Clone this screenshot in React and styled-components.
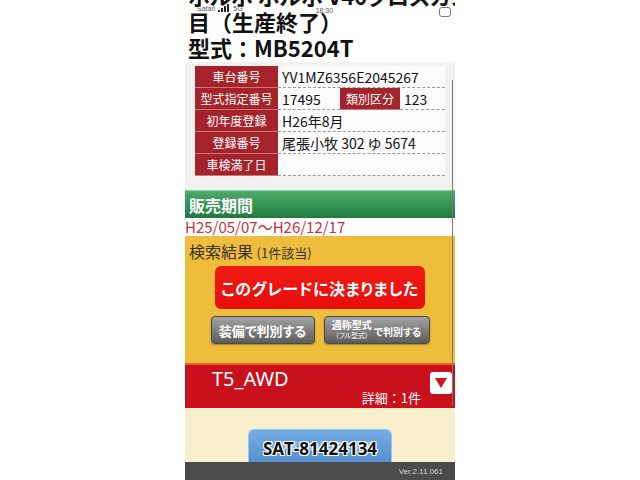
import React from 'react';
import styled, { createGlobalStyle } from 'styled-components';

const GlobalStyle = createGlobalStyle`
  body {
    margin: 0;
    background: #ffffff;
    font-family: "Noto Sans CJK JP", "Noto Sans", sans-serif;
  }
`;

const Phone = styled.div`
  position: relative;
  width: 270px;
  height: 480px;
  margin: 0 auto;
  overflow: hidden;
  background: #ffffff;
  display: flex;
  flex-direction: column;
`;

const StatusBar = styled.div`
  position: absolute;
  top: 2px;
  left: 12px;
  right: 4px;
  height: 12px;
  display: flex;
  align-items: center;
  gap: 3px;
  font-size: 7px;
  color: #555;
  font-family: "Liberation Sans", sans-serif;
  z-index: 2;
`;

const Clock = styled.span`
  margin-left: 70px;
  margin-top: 4px;
`;

const Battery = styled.span`
  margin-left: auto;
  width: 10px;
  height: 8px;
  margin-top: 8px;
  border: 1px solid #777;
  border-radius: 3px;
`;

const Header = styled.div`
  padding: 0 0 0 3px;
  margin-top: -18px;
`;

const TitleLine = styled.div`
  font-size: 22px;
  line-height: 26px;
  font-weight: 700;
  color: #111;
  white-space: nowrap;
  overflow: hidden;
  font-feature-settings: ${p => (p.$narrow ? '"palt"' : 'normal')};
`;

const InfoSection = styled.div`
  background: #f1f1f1;
  margin-top: 2px;
  padding: 4px 10px 14px;
`;

const Row = styled.div`
  display: grid;
  grid-template-columns: ${p => p.$cols || '83px 1fr'};
  height: 22px;
`;

const Label = styled.div`
  background: #a5232b;
  color: #fff;
  font-size: 12px;
  display: flex;
  align-items: center;
  justify-content: center;
  border-bottom: 1px solid #c9777b;
  box-sizing: border-box;
`;

const Value = styled.div`
  background: #fbfbfb;
  font-size: 14px;
  font-weight: 400;
  color: #111;
  display: flex;
  align-items: center;
  padding-left: 4px;
  border-bottom: 1px dashed #9a9a9a;
  box-sizing: border-box;
  white-space: nowrap;
`;

const GreenBar = styled.div`
  height: 28px;
  background: linear-gradient(#4fab68, #1f7b3d);
  border-top: 1px solid #8fcf9f;
  box-sizing: border-box;
  color: #fff;
  font-size: 16px;
  font-weight: 700;
  padding-left: 4px;
  display: flex;
  align-items: center;
`;

const DateRow = styled.div`
  height: 18px;
  line-height: 18px;
  font-size: 15px;
  color: #c5323a;
  background: #fff;
`;

const ResultArea = styled.div`
  background: #efbd3c;
  height: 129px;
  box-sizing: border-box;
  border-bottom: 2px solid #e2602a;
  display: flex;
  flex-direction: column;
  align-items: center;
`;

const ResultTitle = styled.div`
  align-self: stretch;
  padding: 3px 0 0 4px;
  height: 30px;
  box-sizing: border-box;
  font-size: 16px;
  color: #3b3222;
  small {
    font-size: 13px;
  }
`;

const DecideButton = styled.div`
  width: 210px;
  height: 43px;
  border-radius: 6px;
  background: linear-gradient(#f21a14, #e60d0d);
  color: #fff;
  font-size: 16px;
  font-weight: 700;
  display: flex;
  align-items: center;
  justify-content: center;
  font-feature-settings: "palt";
  letter-spacing: 0.5px;
`;

const ButtonRow = styled.div`
  display: flex;
  gap: 9px;
  margin-top: 7px;
`;

const GrayButton = styled.div`
  width: ${p => p.$w}px;
  height: 28px;
  box-sizing: border-box;
  border-radius: 4px;
  border: 1px solid #4a4a4a;
  background: linear-gradient(#a3a3a3, #5c5c5c);
  box-shadow: 0 1px 2px rgba(0, 0, 0, 0.35);
  color: #fff;
  font-weight: 700;
  font-size: 13px;
  display: flex;
  align-items: center;
  justify-content: center;
  font-feature-settings: "palt";
`;

const Stack = styled.span`
  display: flex;
  flex-direction: column;
  align-items: center;
  line-height: 10px;
  font-size: 10px;
  small {
    font-size: 7px;
    font-weight: 400;
  }
`;

const Trail = styled.span`
  font-size: 10px;
  margin-left: 2px;
  margin-top: 3px;
`;

const GradeBand = styled.div`
  height: 43px;
  background: #c8111d;
  display: flex;
  align-items: flex-start;
  padding: 2px 3px 0 27px;
  box-sizing: border-box;
  color: #fff;
`;

const GradeName = styled.div`
  font-size: 20px;
  line-height: 24px;
  font-family: "Noto Sans", sans-serif;
`;

const Detail = styled.div`
  margin-left: auto;
  align-self: flex-end;
  margin-bottom: 1px;
  font-size: 13px;
`;

const ArrowBox = styled.div`
  width: 22px;
  height: 22px;
  margin: 5px 0 0 9px;
  background: #fff;
  border-radius: 3px;
  display: flex;
  align-items: center;
  justify-content: center;
`;

const CreamArea = styled.div`
  height: 54px;
  background: #f6eecd;
  display: flex;
  justify-content: center;
  align-items: flex-end;
`;

const BlueButton = styled.div`
  position: relative;
  width: 144px;
  height: 33px;
  box-sizing: border-box;
  border-radius: 6px 6px 0 0;
  border: 1px solid #9cc3ec;
  border-bottom: none;
  background: linear-gradient(#74ade6, #5790cf);
  display: flex;
  align-items: center;
  justify-content: center;
`;

const FaintText = styled.span`
  font-size: 11px;
  color: rgba(255, 255, 255, 0.55);
  font-weight: 700;
`;

const Watermark = styled.span`
  position: absolute;
  left: 0;
  right: 0;
  top: 7px;
  text-align: center;
  font-family: "Open Sans", sans-serif;
  font-weight: 700;
  font-size: 17px;
  color: #111;
  text-shadow: 1px 1px 0 #fff, -1px -1px 0 #fff, 1px -1px 0 #fff, -1px 1px 0 #fff;
`;

const Footer = styled.div`
  height: 18px;
  background: #4b4b4b;
  color: #d8d8d8;
  font-size: 8px;
  font-family: "Liberation Sans", sans-serif;
  display: flex;
  align-items: center;
  justify-content: flex-end;
  padding-right: 12px;
`;

const ScrollLine = styled.div`
  position: absolute;
  left: 267px;
  top: 80px;
  width: 1px;
  height: 325px;
  background: #7a7a7a;
`;

export default function App() {
  return (
    <>
      <GlobalStyle />
      <Phone>
        <StatusBar>
          <span>Safari</span>
          <svg width="12" height="8" viewBox="0 0 12 8">
            <rect x="0" y="6" width="2" height="2" fill="#222" />
            <rect x="3" y="4" width="2" height="4" fill="#222" />
            <rect x="6" y="2" width="2" height="6" fill="#222" />
            <rect x="9" y="0" width="2" height="8" fill="#222" />
          </svg>
          <span>5G</span>
          <Clock>18:30</Clock>
          <Battery />
        </StatusBar>
        <Header>
          <TitleLine $narrow>ボルボ ボルボ V40クロスカントリー 1代</TitleLine>
          <TitleLine>目（生産終了）</TitleLine>
          <TitleLine>型式：MB5204T</TitleLine>
        </Header>
        <InfoSection>
          <Row>
            <Label>車台番号</Label>
            <Value>YV1MZ6356E2045267</Value>
          </Row>
          <Row $cols="83px 62px 60px 1fr">
            <Label>型式指定番号</Label>
            <Value>17495</Value>
            <Label>類別区分</Label>
            <Value>123</Value>
          </Row>
          <Row>
            <Label>初年度登録</Label>
            <Value>H26年8月</Value>
          </Row>
          <Row>
            <Label>登録番号</Label>
            <Value>尾張小牧 302 ゆ 5674</Value>
          </Row>
          <Row>
            <Label>車検満了日</Label>
            <Value />
          </Row>
        </InfoSection>
        <GreenBar>販売期間</GreenBar>
        <DateRow>H25/05/07〜H26/12/17</DateRow>
        <ResultArea>
          <ResultTitle>
            検索結果 <small>(1件該当)</small>
          </ResultTitle>
          <DecideButton>このグレードに決まりました</DecideButton>
          <ButtonRow>
            <GrayButton $w={104}>装備で判別する</GrayButton>
            <GrayButton $w={106}>
              <Stack>
                通称型式
                <small>(フル型式)</small>
              </Stack>
              <Trail>で判別する</Trail>
            </GrayButton>
          </ButtonRow>
        </ResultArea>
        <GradeBand>
          <GradeName>T5_AWD</GradeName>
          <Detail>詳細：1件</Detail>
          <ArrowBox>
            <svg width="12" height="10" viewBox="0 0 12 10">
              <polygon points="0,0 12,0 6,10" fill="#d0101d" />
            </svg>
          </ArrowBox>
        </GradeBand>
        <CreamArea>
          <BlueButton>
            <FaintText>この車両の詳細を見る</FaintText>
            <Watermark>SAT-81424134</Watermark>
          </BlueButton>
        </CreamArea>
        <Footer>Ver.2.11.061</Footer>
        <ScrollLine />
      </Phone>
    </>
  );
}
